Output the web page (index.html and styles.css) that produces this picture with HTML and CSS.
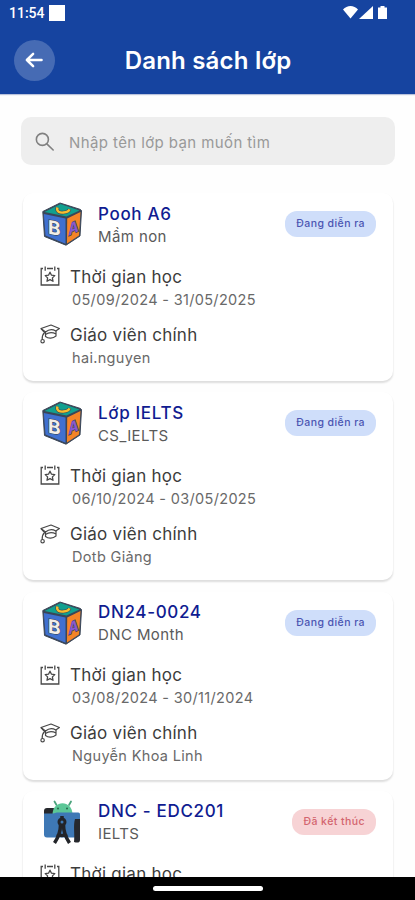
FILE: index.html
```html
<!DOCTYPE html>
<html lang="vi">
<head>
<meta charset="utf-8">
<title>Danh sách lớp</title>
<link rel="stylesheet" href="styles.css">
</head>
<body>
<svg class="defs" aria-hidden="true">
  <symbol id="block" viewBox="0 0 40 44">
    <path d="M.8 9.500 18 1l20.500 6.500 1 1L38 34 24 43.200 2.500 34.500z" fill="#3a4658" stroke="#3a4658" stroke-width="1" stroke-linejoin="round"/>
    <path d="M2.500 10 18.500 2l19 6.500L24.500 14.500z" fill="#12a08f"/>
    <path d="M1.800 12 23.500 16.500v25.200L3.500 33.500z" fill="#3f70d0"/>
    <path d="M25.200 16.500 38.500 10 37 33.500 25 41.500z" fill="#f58427"/>
    <path d="M15.500 5.500c-1.500 4 2.500 5.500 6 5 3-.3 5.500-1.500 6-3.200" fill="none" stroke="#3a4658" stroke-width="3.600"/>
    <path d="M15.500 5.500c-1.500 4 2.500 5.500 6 5 3-.3 5.500-1.500 6-3.200" fill="none" stroke="#f8bd2e" stroke-width="2.400"/>
    <text class="block-b" transform="translate(6 31.500) skewY(11)">B</text>
    <text class="block-a" transform="translate(26.500 34) scale(.95 1.150) skewY(-22)">A</text>
  </symbol>
  <symbol id="studio" viewBox="0 0 40 44">
    <rect x="2" y="8" width="12" height="12" rx="3" fill="#26282d"/>
    <path d="m14.500 5-2-3.500m14.500 3.500 2-3.500" stroke="#4ba37c" stroke-width="1.800" stroke-linecap="round"/>
    <path d="M10.500 16c-1-17 21-17 20 0z" fill="#5bc797"/>
    <circle cx="16" cy="8.500" r="1" fill="#28684e"/><circle cx="25" cy="8.500" r="1" fill="#28684e"/>
    <path d="M2 13.500h9c2 0 2-1 4-1h21c2 0 2 1 2 3v19c0 2-1 3-3 3H5c-2 0-3-1-3-3z" fill="#3e78b5"/>
    <path d="M33 19h5v21c0 3-3 3-6 2 1-7-1-17 1-23z" fill="#26282d"/>
    <circle cx="20" cy="22" r="3" fill="none" stroke="#222429" stroke-width="3"/>
    <path d="M20 16v4m-1.500 5c0 7-2 12-6 18m9-18c0 7 2 12 6 18M15 34q5 3 10 0" fill="none" stroke="#222429" stroke-width="3.500"/>
  </symbol>
  <symbol id="calendar" viewBox="0 0 20 20">
    <g fill="none" stroke="currentColor" stroke-width="1.300">
      <path d="M3 2.500H1.200v16.500h17.600V2.500H17M7 2.500h6M5.200.5v4.200m9.600-4.200v4.200"/>
      <path d="m10 6.200 1.500 3 3.300.4-2.400 2.300.6 3.400-3-1.700-3 1.700.6-3.400-2.400-2.300 3.300-.4z" stroke-linejoin="round"/>
    </g>
  </symbol>
  <symbol id="cap" viewBox="0 0 20 20">
    <g fill="none" stroke="currentColor" stroke-width="1.200" stroke-linejoin="round">
      <path d="M1 4.500 11 1l8.400 3.500L15.800 7C12.500 5 8.500 5.500 5.500 8z"/>
      <path d="M5.500 8v4.500c3 2.500 7.500 2 10.500-.5V7M5.500 10.500c3-2 7.500-2 10.500-.5M1 4.500 4.500 8.500c-2 2-2.500 4-2.300 7"/>
      <circle cx="2.600" cy="17.200" r="1.700"/>
    </g>
  </symbol>
</svg>
<div class="screen">
  <header class="header">
    <div class="status">
      <span class="time">11:54</span><span class="status-square"></span>
      <svg class="status-icons" viewBox="0 0 46 16" fill="#fff">
        <path d="M0 4.500C4-.2 11-.2 15 4.500L7.500 13.500z"/>
        <path d="M30 1v13H16z"/>
        <path d="M37.500 1h4v1.500h2.500v11.500h-9V2.500h2.500z"/>
      </svg>
    </div>
    <div class="titlebar">
      <span class="back"><svg viewBox="0 0 20 18"><path d="M18.500 9H2m7-7L2 9l7 7"/></svg></span>
      <h1 class="title">Danh sách lớp</h1>
    </div>
  </header>
  <main class="content">
    <div class="search">
      <svg class="search-icon" viewBox="0 0 18 18"><circle cx="7" cy="7" r="5.700"/><path d="m11.200 11.200 6 5.800"/></svg>
      <span class="placeholder">Nhập tên lớp bạn muốn tìm</span>
    </div>
    <section class="list">
      <article class="card">
        <div class="card-head">
          <svg class="picture"><use href="#block"/></svg>
          <div class="names"><h2 class="name">Pooh A6</h2><p class="program">Mầm non</p></div>
          <span class="badge">Đang diễn ra</span>
        </div>
        <div class="info"><svg class="icon"><use href="#calendar"/></svg><p class="label">Thời gian học</p><p class="value">05/09/2024 - 31/05/2025</p></div>
        <div class="info"><svg class="icon"><use href="#cap"/></svg><p class="label">Giáo viên chính</p><p class="value">hai.nguyen</p></div>
      </article>
      <article class="card">
        <div class="card-head">
          <svg class="picture"><use href="#block"/></svg>
          <div class="names"><h2 class="name">Lớp IELTS</h2><p class="program">CS_IELTS</p></div>
          <span class="badge">Đang diễn ra</span>
        </div>
        <div class="info"><svg class="icon"><use href="#calendar"/></svg><p class="label">Thời gian học</p><p class="value">06/10/2024 - 03/05/2025</p></div>
        <div class="info"><svg class="icon"><use href="#cap"/></svg><p class="label">Giáo viên chính</p><p class="value">Dotb Giảng</p></div>
      </article>
      <article class="card">
        <div class="card-head">
          <svg class="picture"><use href="#block"/></svg>
          <div class="names"><h2 class="name">DN24-0024</h2><p class="program">DNC Month</p></div>
          <span class="badge">Đang diễn ra</span>
        </div>
        <div class="info"><svg class="icon"><use href="#calendar"/></svg><p class="label">Thời gian học</p><p class="value">03/08/2024 - 30/11/2024</p></div>
        <div class="info"><svg class="icon"><use href="#cap"/></svg><p class="label">Giáo viên chính</p><p class="value">Nguyễn Khoa Linh</p></div>
      </article>
      <article class="card">
        <div class="card-head">
          <svg class="picture"><use href="#studio"/></svg>
          <div class="names"><h2 class="name">DNC - EDC201</h2><p class="program">IELTS</p></div>
          <span class="badge badge-ended">Đã kết thúc</span>
        </div>
        <div class="info"><svg class="icon"><use href="#calendar"/></svg><p class="label">Thời gian học</p></div>
      </article>
    </section>
  </main>
  <footer class="navbar"><span class="handle"></span></footer>
</div>
</body>
</html>
```
FILE: styles.css
```css
* { box-sizing: border-box; }
body, h1, h2, p { margin: 0; }
body { font-family: Inter, "Noto Sans", sans-serif; background: #fefefe; overflow: hidden; }
.defs { display: none; }
.screen { display: flex; flex-direction: column; width: 415px; height: 900px; overflow: hidden; }

.header { flex: none; height: 94px; background: #1644a0; color: #fff; box-shadow: 0 1px 1px #b9c2dc; }
.status { display: flex; align-items: center; height: 26px; padding: 0 26px 0 9px; }
.time { width: 40px; font: 500 14px/26px Roboto, sans-serif; }
.status-square { width: 16px; height: 16px; background: #fff; }
.status-icons { width: 46px; height: 16px; margin-left: auto; }
.titlebar { display: grid; grid-template-columns: 41px 1fr 41px; align-items: center; height: 68px; padding: 0 13px 0 14px; }
.back { display: grid; place-items: center; width: 41px; height: 41px; border-radius: 50%; background: #466bb4; }
.back svg { width: 18px; height: 16px; margin-right: 1px; fill: none; stroke: #fff; stroke-width: 2.8; stroke-linecap: round; stroke-linejoin: round; }
.title { padding-top: 1px; text-align: center; font-size: 24px; line-height: 32px; font-weight: 600; letter-spacing: 0.2px; }

.content { flex: 1; min-height: 0; overflow: hidden; padding: 23px 20px 0 21px; }
.search { display: flex; align-items: center; height: 48px; padding-left: 14px; border-radius: 10px; background: #eee; }
.search-icon { width: 19px; height: 19px; fill: none; stroke: #808080; stroke-width: 1.5; stroke-linecap: round; }
.placeholder { margin-left: 15px; padding-top: 2px; font-size: 15px; letter-spacing: 0.4px; color: #999; }

.list { display: grid; gap: 11.3px; padding: 28px 2px 0 2px; }
.card { height: 188px; padding: 9px 17px 0; border-radius: 10px; background: #fff; box-shadow: 0 2px 2px #dedede, 0 1px 2px #f2f2f2; }
.card-head { display: flex; align-items: flex-start; height: 62.500px; }
.picture { width: 40px; height: 44px; margin-left: 2px; }
.names { flex: 1; margin-left: 16px; padding-top: 0.5px; }
.name { font-size: 17px; line-height: 23px; font-weight: 500; letter-spacing: 0.67px; color: #101c91; }
.program { font-size: 15px; line-height: 22px; letter-spacing: 0.4px; color: #5a5a5a; }
.badge { height: 26px; margin-top: 9px; padding: 0 11px; border-radius: 12px; background: #cfdefa; color: #4b55b2; font-size: 10.500px; line-height: 26px; font-weight: 500; letter-spacing: 0.43px; }
.badge-ended { background: #f7d3d5; color: #d3646e; }
.info { display: grid; grid-template-columns: 30px 1fr; grid-template-rows: 24px 22px; height: 58.300px; }
.icon { width: 20px; height: 20px; margin-top: 1.500px; color: #484848; }
.label { font-size: 17px; line-height: 24px; letter-spacing: 0.25px; color: #3c3c3c; }
.value { grid-column: 2; padding-left: 2px; font-size: 14.500px; line-height: 22px; letter-spacing: 0.33px; color: #696969; }

.block-b, .block-a { font-family: Inter, sans-serif; font-weight: 700; stroke: #3a4658; stroke-width: 1.2px; paint-order: stroke; }
.block-b { font-size: 19px; fill: #f2eee8; }
.block-a { font-size: 14px; fill: #8858d0; }

.navbar { flex: none; display: flex; justify-content: center; height: 23px; padding-top: 9px; background: #000; }
.handle { width: 110px; height: 5px; border-radius: 3px; background: #fff; }
```
